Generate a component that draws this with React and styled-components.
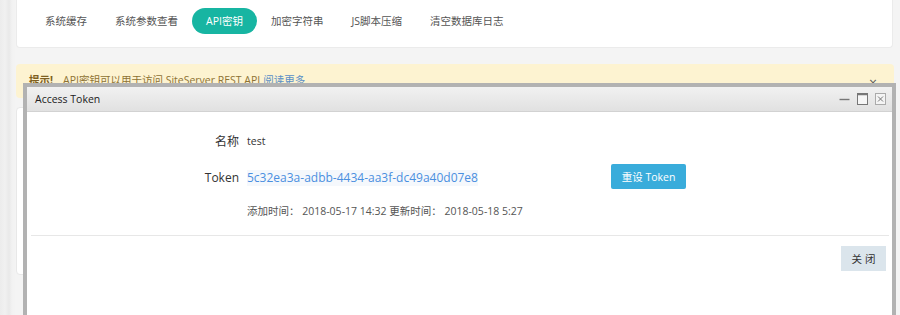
import React from "react";
import styled, { createGlobalStyle } from "styled-components";

const Global = createGlobalStyle`
  html, body { margin: 0; padding: 0; }
  body {
    background: #f4f4f4;
    font-family: "Open Sans", "Noto Sans CJK SC", sans-serif;
    color: #333;
    overflow: hidden;
  }
`;

const Page = styled.div`
  position: relative;
  display: flex;
  width: 900px;
  height: 315px;
  overflow: hidden;
`;

const Shadow = styled.div`
  width: 16px;
  flex: none;
  background: linear-gradient(to right, #ececec 0, #f1f1f1 5px, #e9e9e9 9px, #f2f2f2 12px, #f4f4f4 16px);
`;

const Main = styled.div`
  flex: 1;
  display: flex;
  flex-direction: column;
  padding-right: 6px;
`;

const TabCard = styled.div`
  height: 47px;
  background: #fff;
  border: 1px solid #ebebeb;
  border-top: none;
  border-radius: 0 0 4px 4px;
  display: flex;
  align-items: center;
  padding-left: 14px;
  margin-right: 1px;
`;

const Tab = styled.div`
  height: 26px;
  padding: 0 14px;
  display: flex;
  align-items: center;
  border-radius: 13px;
  font-size: 10.5px;
  color: ${(p) => (p.$active ? "#fff" : "#555")};
  background: ${(p) => (p.$active ? "#17b5a2" : "transparent")};
  margin-top: -6px;
`;

const Alert = styled.div`
  margin-top: 16px;
  height: 34px;
  box-sizing: border-box;
  background: #fdf3d1;
  border-radius: 4px;
  display: flex;
  align-items: flex-start;
  padding: 9px 17px 0 13px;
  line-height: 15px;
  font-size: 10.5px;
  color: #8d7233;
`;

const AlertStrong = styled.b`
  color: #7e5f22;
  margin-right: 10px;
`;

const AlertLink = styled.span`
  color: #5a8fc6;
  margin-left: 3px;
`;

const AlertClose = styled.span`
  margin-left: auto;
  margin-top: 2px;
  font-size: 14px;
  color: #555;
`;

const BackCard = styled.div`
  margin-top: 9px;
  height: 166px;
  background: #fff;
  border: 1px solid #e8e8e8;
  border-radius: 4px;
  margin-right: 1px;
`;

const Modal = styled.div`
  position: absolute;
  left: 23px;
  top: 83px;
  width: 873px;
  height: 260px;
  box-sizing: border-box;
  border: 4px solid rgba(0, 0, 0, 0.3);
  background-clip: padding-box;
  background: #fff;
  display: flex;
  flex-direction: column;
`;

const TitleBar = styled.div`
  height: 24px;
  flex: none;
  border-bottom: 1px solid #d2d2d2;
  background: linear-gradient(#f1f1f1, #e1e1e1);
  display: flex;
  align-items: center;
  padding: 0 6px 0 8px;
  font-size: 10.5px;
  color: #222;
`;

const WinButtons = styled.div`
  margin-left: auto;
  display: flex;
  align-items: center;
  gap: 7px;
`;

const Body = styled.div`
  padding-top: 18px;
  display: grid;
  grid-template-columns: 212px 356px auto;
  column-gap: 8px;
  grid-template-rows: 22px 26px 18px;
  row-gap: 11px;
`;

const Label = styled.div`
  text-align: right;
  font-size: 12px;
  color: #333;
  display: flex;
  align-items: center;
  justify-content: flex-end;
  padding-top: ${(p) => p.$shift || 0}px;
`;

const Value = styled.div`
  font-size: 10.5px;
  color: #333;
  display: flex;
  align-items: center;
  grid-column: ${(p) => p.$span || "auto"};
  padding-top: ${(p) => p.$shift || 0}px;
`;

const TokenLink = styled.span`
  font-size: 12px;
  color: #4a8fe0;
  background: #f5f8fc;
  line-height: 16px;
`;

const Muted = styled.span`
  color: #555;
`;

const ResetButton = styled.button`
  width: 75px;
  height: 25px;
  border: none;
  border-radius: 2px;
  background: #39acdb;
  color: #fff;
  font-family: inherit;
  font-size: 10.5px;
  padding: 0;
  align-self: center;
`;

const Divider = styled.div`
  margin: 17px 3px 0 4px;
  height: 1px;
  background: #e7e7e7;
`;

const Footer = styled.div`
  display: flex;
  justify-content: flex-end;
  padding: 10px 6px 0 0;
`;

const CloseButton = styled.button`
  width: 45px;
  height: 25px;
  border: none;
  background: #dbe5ec;
  color: #333;
  font-family: inherit;
  font-size: 10.5px;
  padding: 0;
  letter-spacing: 3px;
  text-indent: 3px;
`;

const tabs = ["系统缓存", "系统参数查看", "API密钥", "加密字符串", "JS脚本压缩", "清空数据库日志"];

export default function App() {
  return (
    <Page>
      <Global />
      <Shadow />
      <Main>
        <TabCard>
          {tabs.map((t) => (
            <Tab key={t} $active={t === "API密钥"}>{t}</Tab>
          ))}
        </TabCard>
        <Alert>
          <AlertStrong>提示!</AlertStrong>
          API密钥可以用于访问 SiteServer REST API<AlertLink>阅读更多</AlertLink>
          <AlertClose>×</AlertClose>
        </Alert>
        <BackCard />
      </Main>
      <Modal>
        <TitleBar>
          Access Token
          <WinButtons>
            <svg width="11" height="11" viewBox="0 0 11 11">
              <line x1="0.5" y1="5.5" x2="10.5" y2="5.5" stroke="#777" strokeWidth="1.4" />
            </svg>
            <svg width="11" height="12" viewBox="0 0 11 12">
              <rect x="0.5" y="0.5" width="10" height="11" fill="#f6f6f6" stroke="#777" />
              <line x1="0.5" y1="1.5" x2="10.5" y2="1.5" stroke="#777" strokeWidth="1.5" />
            </svg>
            <svg width="11" height="12" viewBox="0 0 11 12">
              <rect x="0.5" y="0.5" width="10" height="11" fill="#f4f4f4" stroke="#aaa" />
              <path d="M3 3.5 L8 8.5 M8 3.5 L3 8.5" stroke="#777" strokeWidth="1" />
            </svg>
          </WinButtons>
        </TitleBar>
        <Body>
          <Label>名称</Label>
          <Value $span="2 / 4">test</Value>
          <Label $shift={3}>Token</Label>
          <Value $shift={3}>
            <TokenLink>5c32ea3a-adbb-4434-aa3f-dc49a40d07e8</TokenLink>
          </Value>
          <ResetButton>重设 Token</ResetButton>
          <div />
          <Value $span="2 / 4" $shift={3}>
            <Muted>添加时间：</Muted>
            <Muted>&nbsp;2018-05-17 14:32&nbsp;</Muted>
            <Muted>更新时间：</Muted>
            <Muted>&nbsp;2018-05-18 5:27</Muted>
          </Value>
        </Body>
        <Divider />
        <Footer>
          <CloseButton>关闭</CloseButton>
        </Footer>
      </Modal>
    </Page>
  );
}
